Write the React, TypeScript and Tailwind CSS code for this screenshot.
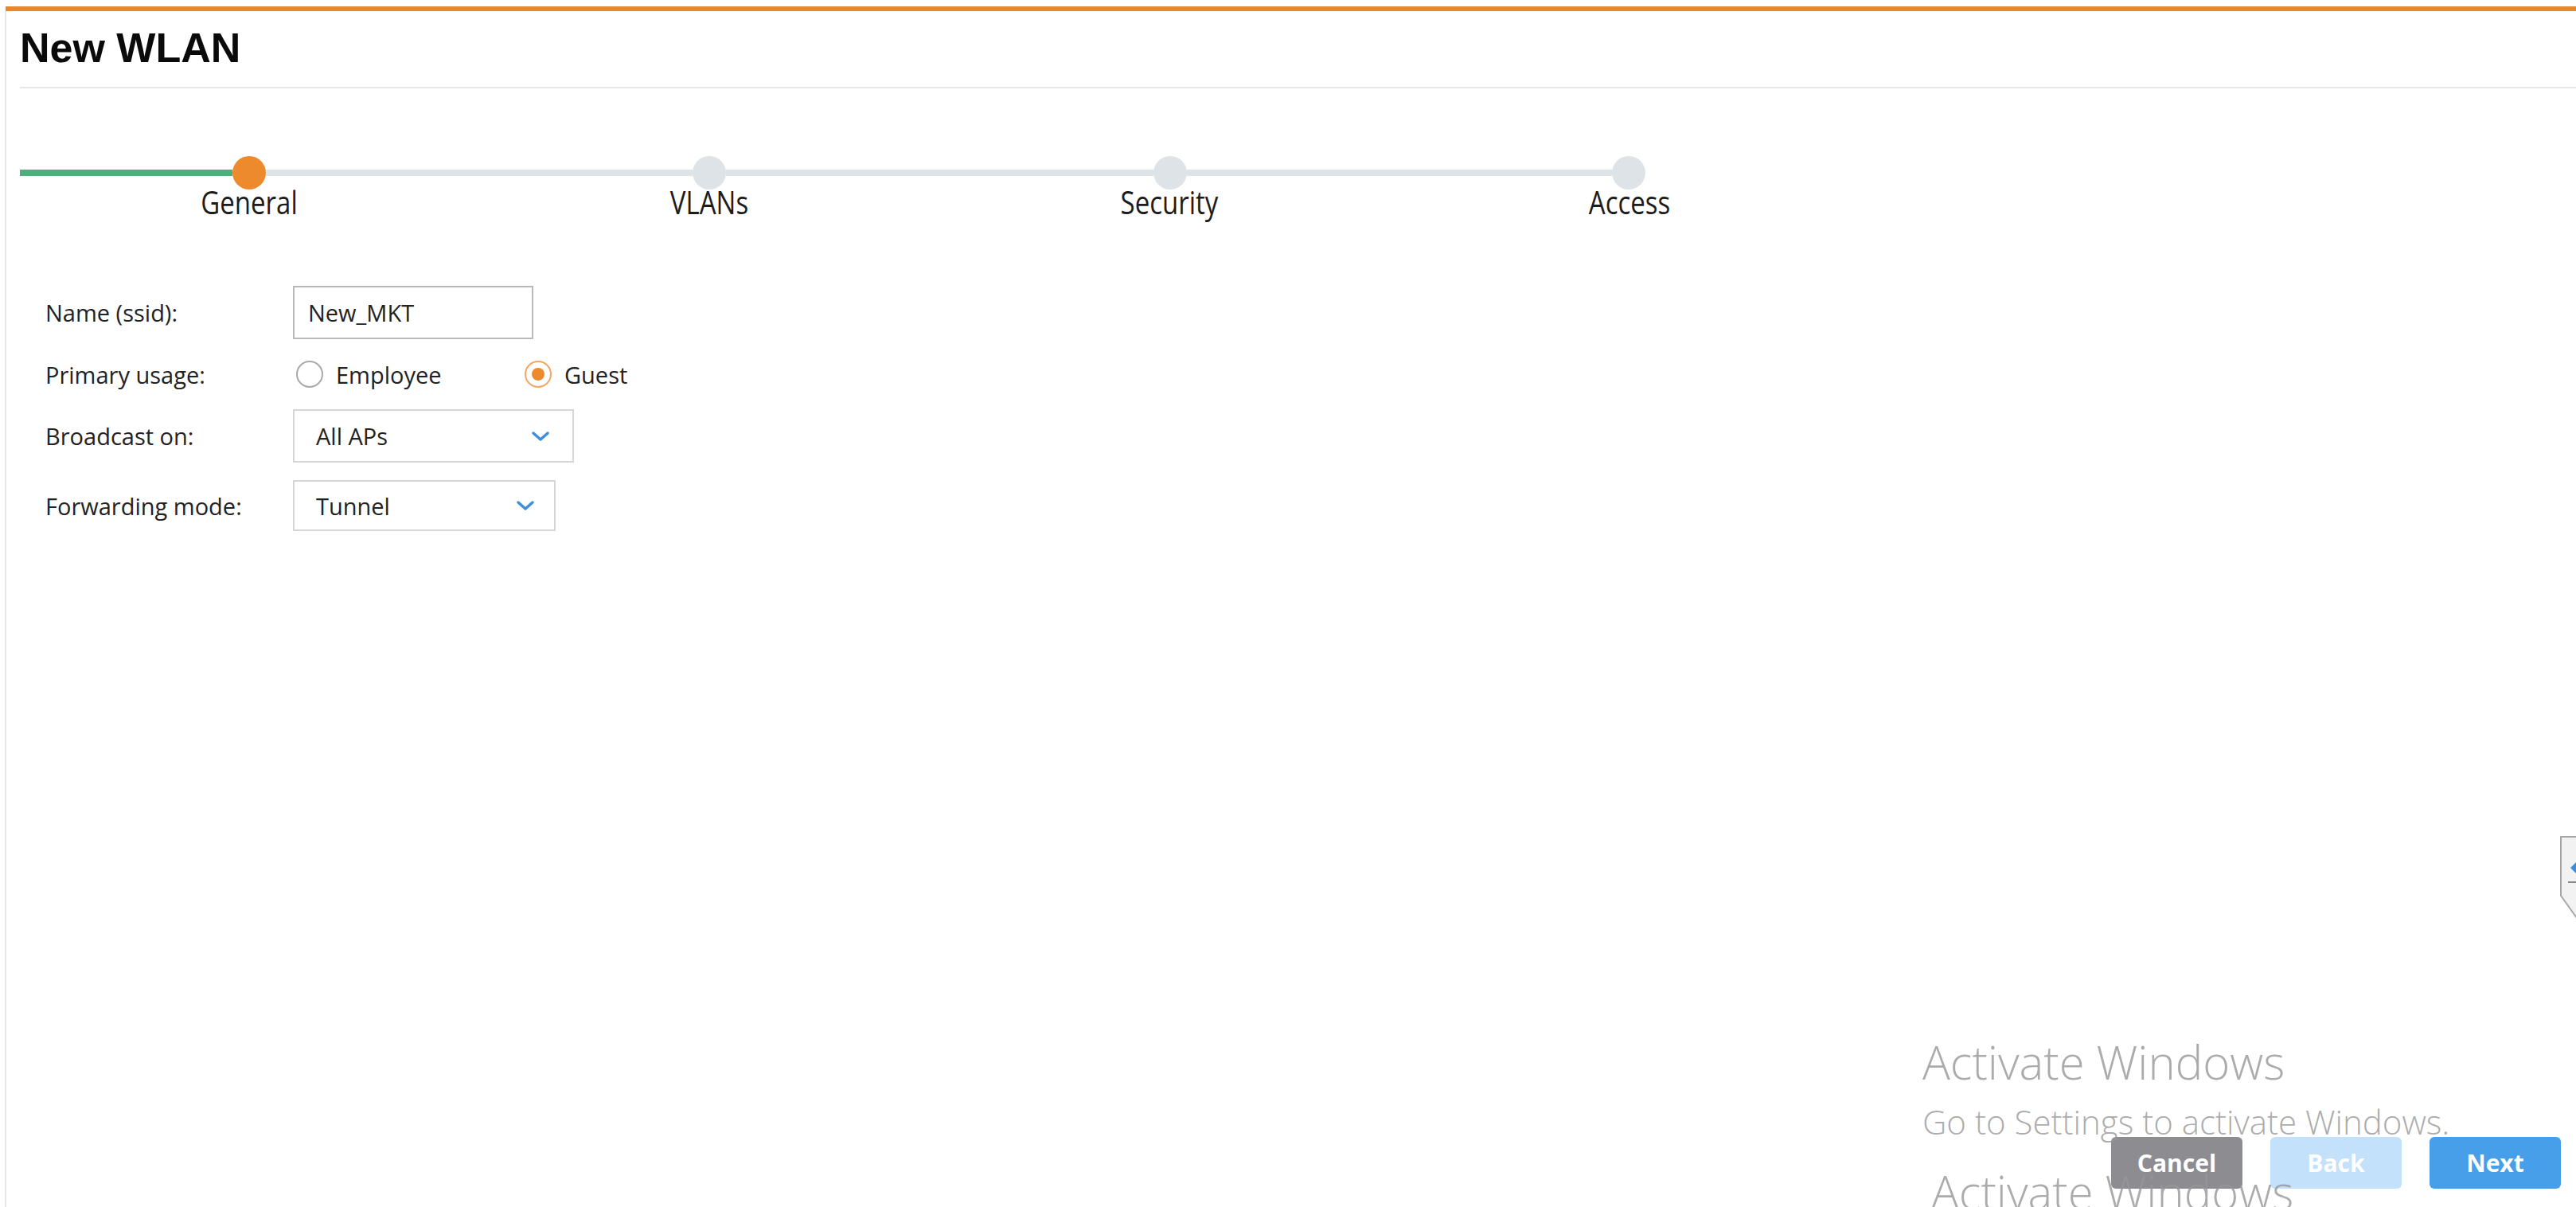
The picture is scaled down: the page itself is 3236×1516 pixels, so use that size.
import React from "react";

const steps = ["General", "VLANs", "Security", "Access"];

function Chevron() {
  return (
    <svg width="24" height="14" viewBox="0 0 24 14" fill="none">
      <path d="M3 3 L12 11 L21 3" stroke="#3d8fdc" strokeWidth="3.5" strokeLinecap="round" strokeLinejoin="round" />
    </svg>
  );
}

function Stepper() {
  return (
    <div className="ml-[17px] mt-[85px]">
      <div className="flex items-center">
        <div className="h-[8px] w-[267px] bg-[#52ad7c]" />
        <div className="h-[42px] w-[42px] rounded-full bg-[#ee8a2e]" />
        <div className="h-[8px] w-[536px] bg-[#dde3e6]" />
        <div className="h-[42px] w-[42px] rounded-full bg-[#dde3e6]" />
        <div className="h-[8px] w-[537px] bg-[#dde3e6]" />
        <div className="h-[42px] w-[42px] rounded-full bg-[#dde3e6]" />
        <div className="h-[8px] w-[534px] bg-[#dde3e6]" />
        <div className="h-[42px] w-[42px] rounded-full bg-[#dde3e6]" />
      </div>
      <div className="ml-[208px] flex gap-[418px]">
        {steps.map((s) => (
          <div key={s} className="flex h-[34px] w-[160px] justify-center">
            <span className="inline-block scale-y-[1.2] text-[33px] leading-none text-[#1c1c1c]">{s}</span>
          </div>
        ))}
      </div>
    </div>
  );
}

function Label({ children }: { children: React.ReactNode }) {
  return <div className="w-[311px] text-[29px] leading-none">{children}</div>;
}

function Form() {
  return (
    <div className="ml-[49px] mt-[87px] flex flex-col gap-[22px]">
      <div className="flex items-center">
        <Label>Name (ssid):</Label>
        <div className="flex h-[67px] w-[302px] items-center border-2 border-[#b9b9b9] pl-[17px] text-[29px] leading-none">
          New_MKT
        </div>
      </div>
      <div className="flex h-[44px] items-center">
        <Label>Primary usage:</Label>
        <div className="ml-[4px] flex w-[287px] items-center gap-[16px]">
          <div className="h-[34px] w-[34px] rounded-full border-2 border-[#a9a9a9] bg-white" />
          <span className="text-[29px] leading-none">Employee</span>
        </div>
        <div className="flex items-center gap-[16px]">
          <div className="flex h-[34px] w-[34px] items-center justify-center rounded-full border-2 border-[#f3a661] bg-white">
            <div className="h-[16px] w-[16px] rounded-full bg-[#ee8a2e]" />
          </div>
          <span className="text-[29px] leading-none">Guest</span>
        </div>
      </div>
      <div className="flex items-center">
        <Label>Broadcast on:</Label>
        <div className="flex h-[67px] w-[353px] items-center justify-between border-2 border-[#d6d6d6] pl-[27px] pr-[28px]">
          <span className="text-[29px] leading-none">All APs</span>
          <Chevron />
        </div>
      </div>
      <div className="flex items-center">
        <Label>Forwarding mode:</Label>
        <div className="flex h-[64px] w-[330px] items-center justify-between border-2 border-[#d6d6d6] pl-[27px] pr-[24px]">
          <span className="text-[29px] leading-none">Tunnel</span>
          <Chevron />
        </div>
      </div>
    </div>
  );
}

export default function App() {
  return (
    <div className="relative h-[1516px] w-full overflow-hidden bg-white pl-[6px] pt-[8px] font-['Open_Sans',sans-serif] text-[#222]">
      <div className="ml-[1px] h-[6px] bg-[#e8872c]" />
      <div className="flex h-[1502px] flex-col border-l-2 border-[#e5e5e5]">
        <div className="ml-[17px] pt-[20px]">
          <h1 className="font-['Liberation_Sans',Arial,sans-serif] text-[52px] font-bold leading-none text-[#0a0a0a]">
            New WLAN
          </h1>
          <div className="mt-[23px] h-[2px] bg-[#e6e6e6]" />
        </div>
        <Stepper />
        <Form />
        <div className="mt-auto flex justify-end gap-[35px] pb-[23px] pr-[19px]">
          <button className="h-[65px] w-[165px] rounded-[6px] bg-[#8d8d91] text-[30px] font-bold text-white">Cancel</button>
          <button className="h-[65px] w-[165px] rounded-[6px] bg-[#c3e1fb] text-[30px] font-bold text-white">Back</button>
          <button className="h-[65px] w-[165px] rounded-[6px] bg-[#479ee9] text-[30px] font-bold text-white">Next</button>
        </div>
      </div>

      <div className="pointer-events-none absolute left-[2415px] top-[1305px] font-light text-[rgba(150,150,150,0.8)]">
        <div className="text-[58px] leading-none">Activate Windows</div>
        <div className="mt-[25px] text-[42px] leading-none">Go to Settings to activate Windows.</div>
        <div className="ml-[11px] mt-[38px] text-[58px] leading-none">Activate Windows</div>
      </div>

      <svg className="absolute right-0 top-[1050px]" width="20" height="104" viewBox="0 0 20 104">
        <path d="M1 1 H21 V103 L1 75 Z" fill="#f2f2f2" stroke="#a6a6a6" strokeWidth="2" />
        <path d="M13 40 L20 33 L20 47 Z" fill="#3d8fdc" />
        <path d="M10 58 H20" stroke="#8a8a8a" strokeWidth="2" />
      </svg>
    </div>
  );
}
